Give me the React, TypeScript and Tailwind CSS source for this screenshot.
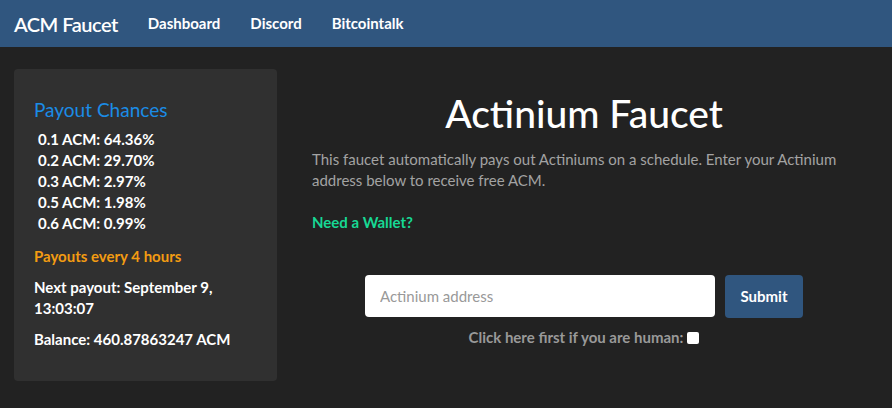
export default function App() {
  const chances = [
    ['0.1', '64.36%'],
    ['0.2', '29.70%'],
    ['0.3', '2.97%'],
    ['0.5', '1.98%'],
    ['0.6', '0.99%'],
  ];

  return (
    <div className="min-h-[408px] bg-[#222222] font-['Lato','Open_Sans',sans-serif] text-white">
      {/* Navbar */}
      <nav className="flex h-[47px] items-center bg-[#30567f] pl-[14px]">
        <span className="text-[20px] font-semibold leading-none tracking-[-0.5px]">ACM Faucet</span>
        <ul className="ml-[30px] flex gap-[30px] text-[15px] font-bold">
          <li>Dashboard</li>
          <li>Discord</li>
          <li>Bitcointalk</li>
        </ul>
      </nav>

      <div className="flex">
        {/* Sidebar */}
        <aside className="ml-[14px] mt-[22px] h-[312px] w-[263px] rounded-[4px] bg-[#303030] pl-[20px] pt-[28px]">
          <h3 className="text-[19px] leading-[26px] text-[#1b8ce6]">Payout Chances</h3>
          <ul className="mt-[6px] pl-[4px] text-[15px] font-bold leading-[21px]">
            {chances.map(([amt, pct]) => (
              <li key={amt}>
                {amt} ACM: {pct}
              </li>
            ))}
          </ul>
          <p className="mt-[12px] text-[15px] font-bold leading-[21px] text-[#f39c12]">Payouts every 4 hours</p>
          <p className="mt-[10px] w-[200px] text-[15px] font-bold leading-[21px]">
            Next payout: September 9, 13:03:07
          </p>
          <p className="mt-[10px] text-[15px] font-bold leading-[21px]">Balance: 460.87863247 ACM</p>
        </aside>

        {/* Main */}
        <main className="ml-[35px] mt-[40px] w-[544px]">
          <h1 className="text-center text-[39px] font-medium leading-[52px]">Actinium Faucet</h1>
          <p className="mt-[10px] text-[15px] leading-[21px] text-[#a3a3a3]">
            This faucet automatically pays out Actiniums on a schedule. Enter your Actinium address below to receive
            free ACM.
          </p>
          <p className="mt-[21px] text-[15px] font-bold leading-[21px] text-[#17d894]">Need a Wallet?</p>

          <form className="mt-[42px] flex justify-center gap-[10px]" onSubmit={(e) => e.preventDefault()}>
            <input
              type="text"
              placeholder="Actinium address"
              className="h-[42px] w-[350px] rounded-[4px] bg-white px-[15px] text-[15px] text-[#333] placeholder:text-[#999] outline-none"
            />
            <button
              type="submit"
              className="h-[43px] w-[78px] rounded-[4px] bg-[#30567f] text-[15px] font-bold text-white"
            >
              Submit
            </button>
          </form>
          <label className="mt-[9px] flex items-center justify-center gap-[4px] text-[15px] font-bold leading-[21px] text-[#999]">
            Click here first if you are human:
            <input type="checkbox" className="h-[12px] w-[12px] appearance-none rounded-[2px] bg-white" />
          </label>
        </main>
      </div>
    </div>
  );
}
